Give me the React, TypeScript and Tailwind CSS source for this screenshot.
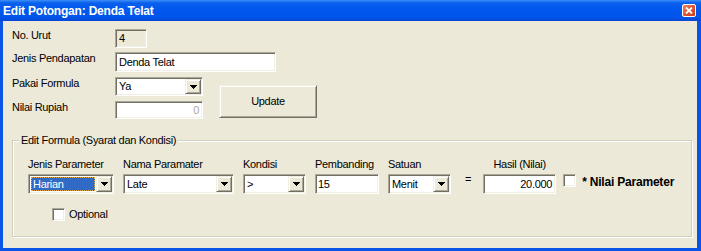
import React from 'react';

const sunken =
  'border border-t-[#ACA899] border-l-[#ACA899] border-r-white border-b-white shadow-[inset_1px_1px_0_#716F64,inset_-1px_-1px_0_#F1EFE2]';
const raised =
  'border border-t-[#F1EFE2] border-l-[#F1EFE2] border-r-[#716F64] border-b-[#716F64] shadow-[inset_1px_1px_0_#fff,inset_-1px_-1px_0_#ACA899]';

const Arrow = () => (
  <svg width="7" height="4" viewBox="0 0 7 4" shapeRendering="crispEdges" fill="#000">
    <rect x="0" y="0" width="7" height="1" />
    <rect x="1" y="1" width="5" height="1" />
    <rect x="2" y="2" width="3" height="1" />
    <rect x="3" y="3" width="1" height="1" />
  </svg>
);

type ComboProps = { value: string; width: string; height: string; selected?: boolean };

const Combo = ({ value, width, height, selected }: ComboProps) => (
  <div className={`flex ${width} ${height} bg-white p-[1px] ${sunken}`}>
    <div className="flex min-w-0 flex-1">
      {selected ? (
        <span className="m-[1px] mr-[1px] flex flex-1 items-center border border-dotted border-[#E3A83C] bg-[#316AC5] pl-[1px] text-white">
          {value}
        </span>
      ) : (
        <span className="flex flex-1 items-center pl-[2px]">{value}</span>
      )}
    </div>
    <div className={`flex w-[16px] items-center justify-center bg-[#ECE9D8] ${raised}`}>
      <Arrow />
    </div>
  </div>
);

const Check = () => <div className={`h-[13px] w-[13px] shrink-0 bg-white ${sunken}`} />;

const Field = ({ label, children, top }: { label: string; children: React.ReactNode; top: string }) => (
  <div className={`flex items-start ${top}`}>
    <span className="w-[103px] shrink-0">{label}</span>
    {children}
  </div>
);

const Column = ({ label, width, children, center }: { label: string; width: string; children: React.ReactNode; center?: boolean }) => (
  <div className={`flex flex-col ${width}`}>
    <span className={`h-[13px] whitespace-nowrap ${center ? 'text-center' : ''}`}>{label}</span>
    <div className="mt-[3px]">{children}</div>
  </div>
);

export default function App() {
  return (
    <div className="flex h-[251px] w-[701px] flex-col bg-[#0B55E6] font-['Liberation_Sans',Arial,sans-serif] text-[11px] leading-[13px] tracking-[-0.3px] text-black">
      <div className="flex h-[21px] shrink-0 items-center justify-between bg-[linear-gradient(180deg,#3D8EF8_0%,#0A60EC_14%,#0058EE_45%,#0055EA_80%,#0846D6_100%)] pl-[3px] pr-[5px]">
        <span className="pt-[2px] text-[12px] font-bold tracking-[-0.2px] text-white">Edit Potongan: Denda Telat</span>
        <div className="flex h-[13px] w-[14px] items-center justify-center rounded-[2px] border border-white bg-[linear-gradient(135deg,#EE8A6A_0%,#E0552F_50%,#C9401E_100%)]">
          <svg width="8" height="7" viewBox="0 0 8 7">
            <path d="M1 0.5 L7 6.5 M7 0.5 L1 6.5" stroke="#fff" strokeWidth="1.8" />
          </svg>
        </div>
      </div>

      <div className="ml-[3px] mr-[4px] mb-[3px] flex flex-1 flex-col bg-[#ECE9D8] pl-[9px] pt-[8px]">
        <Field label="No. Urut" top="">
          <div className={`flex h-[19px] w-[32px] items-center bg-[#ECE9D8] pl-[3px] ${sunken}`}>4</div>
        </Field>
        <Field label="Jenis Pendapatan" top="mt-[4px]">
          <div className={`flex h-[20px] w-[161px] items-center bg-white pl-[3px] ${sunken}`}>Denda Telat</div>
        </Field>

        <div className="flex">
          <div className="flex flex-col">
            <Field label="Pakai Formula" top="mt-[5px]">
              <Combo value="Ya" width="w-[88px]" height="h-[19px]" />
            </Field>
            <Field label="Nilai Rupiah" top="mt-[5px]">
              <div className={`flex h-[18px] w-[88px] items-center justify-end bg-white pr-[3px] text-[#ACA899] ${sunken}`}>0</div>
            </Field>
          </div>
          <div className={`ml-[16px] mt-[13px] flex h-[33px] w-[98px] items-center justify-center bg-[#ECE9D8] ${raised}`}>
            Update
          </div>
        </div>

        <div className="mt-[21px] flex h-[97px] w-[680px] flex-col border border-[#D0D0BF] pl-[15px] shadow-[inset_1px_1px_0_#fff,1px_1px_0_#fff]">
          <span className="-ml-[9px] -mt-[7px] self-start bg-[#ECE9D8] px-[2px]">Edit Formula (Syarat dan Kondisi)</span>
          <div className="mt-[11px] flex items-start">
            <Column label="Jenis Parameter" width="w-[86px]">
              <Combo value="Harian" width="w-[86px]" height="h-[20px]" selected />
            </Column>
            <Column label="Nama Paramater" width="ml-[9px] w-[111px]">
              <Combo value="Late" width="w-[111px]" height="h-[20px]" />
            </Column>
            <Column label="Kondisi" width="ml-[9px] w-[63px]">
              <Combo value=">" width="w-[63px]" height="h-[20px]" />
            </Column>
            <Column label="Pembanding" width="ml-[9px] w-[64px]">
              <div className={`flex h-[20px] w-[64px] items-center bg-white pl-[2px] ${sunken}`}>15</div>
            </Column>
            <Column label="Satuan" width="ml-[9px] w-[63px]">
              <Combo value="Menit" width="w-[63px]" height="h-[20px]" />
            </Column>
            <span className="ml-[14px] mt-[15px]">=</span>
            <Column label="Hasil (Nilai)" width="ml-[12px] w-[73px]" center>
              <div className={`flex h-[20px] w-[73px] items-center justify-end bg-white pr-[3px] ${sunken}`}>20.000</div>
            </Column>
            <div className="ml-[7px] mt-[16px] flex items-start">
              <Check />
              <span className="ml-[6px] mt-[2px] text-[12px] font-bold tracking-[-0.2px]">* Nilai Parameter</span>
            </div>
          </div>
          <div className="ml-[24px] mt-[14px] flex items-center">
            <Check />
            <span className="ml-[4px]">Optional</span>
          </div>
        </div>
      </div>
    </div>
  );
}
